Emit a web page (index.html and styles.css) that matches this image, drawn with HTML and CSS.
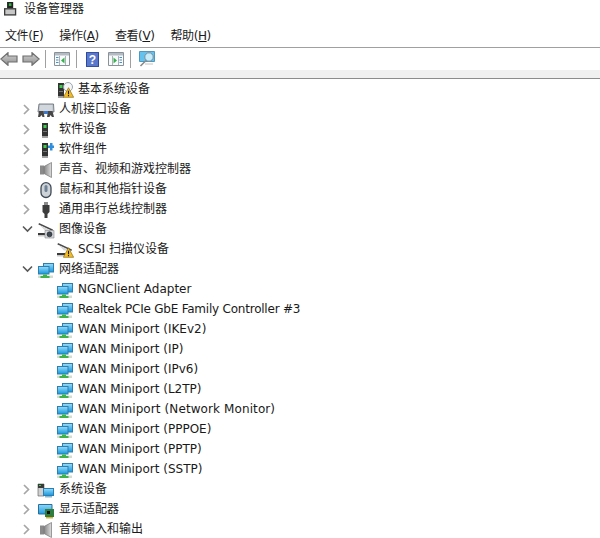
FILE: index.html
```html
<!DOCTYPE html>
<html lang="zh-CN">
<head>
<meta charset="utf-8">
<title>设备管理器</title>
<link rel="stylesheet" href="styles.css">
</head>
<body>
<svg class="defs" width="0" height="0" aria-hidden="true">
  <defs>
    <linearGradient id="scr" x1="0" y1="0" x2="0" y2="1"><stop offset="0" stop-color="#8fd8f7"/><stop offset="1" stop-color="#1f9be0"/></linearGradient>
    <linearGradient id="arrow" x1="0" y1="0" x2="0" y2="1"><stop offset="0" stop-color="#d2d2d2"/><stop offset="1" stop-color="#8f8f8f"/></linearGradient>
    <linearGradient id="cone" x1="0" y1="0" x2="1" y2="0"><stop offset="0" stop-color="#858585"/><stop offset="1" stop-color="#dedede"/></linearGradient>
    <symbol id="tower" viewBox="0 0 16 16"><path d="M0 1h6v13.500H0z" fill="#333"/><path d="M0 14.500h6V16H0z" fill="#a3a3a3"/><path d="M1.500 3h3v3h-3z" fill="#3bd04a"/><path d="M1 9h4v1H1z" fill="#777"/></symbol>
    <symbol id="warn" viewBox="0 0 16 16"><path d="M8 1 15.500 15H.5z" fill="#f4bd22" stroke="#7c5f12" stroke-width=".9"/><path d="M7.200 5.500h1.600v5H7.200zM7.200 11.500h1.600v1.800H7.200z" fill="#1c1c1c"/></symbol>
    <symbol id="net" viewBox="0 0 16 16"><path d="M5 1h11v9.500H5z" fill="#2c7fae"/><path d="M6 2h9v7.500H6z" fill="url(#scr)"/><path d="M0 4h11.500v8.500H0z" fill="#2c7fae"/><path d="M1 5h9.500v6.500H1z" fill="url(#scr)"/><path d="M0 13.500h15V16H0z" fill="#d5ddd2"/><path d="M5 12.500h4v1.500H5zM2.500 14h9v2h-9z" fill="#3fb24a"/></symbol>
    <symbol id="speaker" viewBox="0 0 16 16"><path d="M0 3.500h4v9H0z" fill="#8a8a8a"/><path d="M4 4.500 11.500 .5v15L4 11.500z" fill="url(#cone)" stroke="#757575" stroke-width=".7"/></symbol>
    <symbol id="chev-r" viewBox="0 0 9 11"><path d="M2 1 6.500 5.500 2 10" fill="none" stroke="#a6a6a6" stroke-width="1.700"/></symbol>
    <symbol id="chev-d" viewBox="0 0 11 9"><path d="M1 1.500 5.500 6 10 1.500" fill="none" stroke="#595959" stroke-width="1.600"/></symbol>
    <symbol id="scanner" viewBox="0 0 16 16"><path d="M1 1 15 7.500l-.6 1.400L.4 2.400z" fill="#4a4a4a"/><path d="M1.500 3 13 8.500H7z" fill="#d8d8d8"/><path d="M0 11h8v2H0z" fill="#3a3a3a"/><path d="M0 13h8v1.500H0z" fill="#c9c9c9"/></symbol>
  </defs>
</svg>

<div class="window">
  <header class="titlebar">
    <svg class="title-icon" viewBox="0 0 16 16"><path d="M0 7h14v8.500H0z" fill="#3c3c3c"/><path d="M1.500 8.500h11V14h-11z" fill="#c8c8c8"/><path d="M3.500 0h7v7h-7z" fill="#222"/><path d="M5.500 1.500h3v3h-3z" fill="#35b545"/></svg>
    <span class="title-text">设备管理器</span>
  </header>

  <nav class="menubar">
    <span>文件(<u>F</u>)</span>
    <span>操作(<u>A</u>)</span>
    <span>查看(<u>V</u>)</span>
    <span>帮助(<u>H</u>)</span>
  </nav>

  <div class="toolbar">
    <svg class="tb-arrow" viewBox="0 0 18 14"><path d="M8 .7 .8 7 8 13.300V10h9V4H8z" fill="url(#arrow)" stroke="#6f6f6f" stroke-width="1.200"/></svg>
    <svg class="tb-arrow" viewBox="0 0 18 14"><path d="M10 .7 17.200 7 10 13.300V10H1V4h9z" fill="url(#arrow)" stroke="#6f6f6f" stroke-width="1.200"/></svg>
    <i class="tb-sep"></i>
    <svg class="tb-icon" viewBox="0 0 16 14"><path d="M.5.500h15v13H.5z" fill="#f8fafb" stroke="#8a9299"/><path d="M1 1h14v2.500H1z" fill="#b4bbc2"/><path d="M2 5h2.500v1H2zM2 7.500h2.500v1H2zM2 10h2.500v1H2z" fill="#4b90c8"/><path d="M5.500 4v9M11.500 4v9" stroke="#aab1b8" fill="none"/><path d="M10.500 5.500v6L7 8.500z" fill="#34b34a"/></svg>
    <i class="tb-sep"></i>
    <svg class="tb-help" viewBox="0 0 14 16"><path d="M0 0h14v16H0z" fill="#28459c"/><path d="M1 1h12v14H1z" fill="#5a78cc"/><text x="7" y="13" text-anchor="middle" class="tb-q">?</text></svg>
    <svg class="tb-icon tb-gap" viewBox="0 0 16 14"><path d="M.5.500h15v13H.5z" fill="#f8fafb" stroke="#8a9299"/><path d="M1 1h14v2.500H1z" fill="#b4bbc2"/><path d="M11.500 5H14v1h-2.500zM11.500 7.500H14v1h-2.500zM11.500 10H14v1h-2.500z" fill="#4b90c8"/><path d="M4.500 4v9M10.500 4v9" stroke="#aab1b8" fill="none"/><path d="M5.500 5.500v6L9 8.500z" fill="#34b34a"/></svg>
    <i class="tb-sep"></i>
    <svg class="tb-scan" viewBox="0 0 16 16"><path d="M.5.500h15v10H.5z" fill="#63c2ee" stroke="#4f98c0"/><circle cx="10" cy="6" r="4.200" fill="#c6ecf9" stroke="#7f8f99"/><path d="M7 9.500 1.500 15" stroke="#8a8a8a" stroke-width="1.600" fill="none"/><path d="M6 13h8" stroke="#c4c4c4" fill="none"/></svg>
  </div>
  <div class="band"></div>

  <ul class="tree">
    <li class="child"><span class="ic"><svg viewBox="0 0 16 16"><use href="#tower" x="1"/><circle cx="11" cy="5" r="4.500" fill="#f4f6f8" stroke="#9aa7b0"/></svg><svg class="badge" viewBox="0 0 16 16"><use href="#warn"/></svg></span><span class="lbl">基本系统设备</span></li>
    <li><svg class="chev" viewBox="0 0 9 11"><use href="#chev-r"/></svg><span class="ic"><svg viewBox="0 0 16 16"><path d="M1 2h14.500l.5 8H0z" fill="#c3cad2" stroke="#6d7379" stroke-width=".9"/><path d="M2.500 4h11M2.500 6h11M2.500 8h11" stroke="#fff" stroke-dasharray="1 1" fill="none"/><path d="M1 9h4.500l1 6H4.500L3.500 13 2 15H0zM10 9h4.500L16 15h-2l-1.500-2-1 2H9z" fill="#474747"/><path d="M6 9h4v3H6z" fill="#3f78c4"/></svg></span><span class="lbl">人机接口设备</span></li>
    <li><svg class="chev" viewBox="0 0 9 11"><use href="#chev-r"/></svg><span class="ic"><svg viewBox="0 0 16 16"><use href="#tower" x="4"/></svg></span><span class="lbl">软件设备</span></li>
    <li><svg class="chev" viewBox="0 0 9 11"><use href="#chev-r"/></svg><span class="ic"><svg viewBox="0 0 16 16"><use href="#tower" x="4"/><path d="M10 3.500h2V1h2.500v2.500H16V6h-1.500v2.500H12V6h-2z" fill="#2f8fdc"/></svg></span><span class="lbl">软件组件</span></li>
    <li><svg class="chev" viewBox="0 0 9 11"><use href="#chev-r"/></svg><span class="ic"><svg viewBox="0 0 16 16"><use href="#speaker" x="2"/></svg></span><span class="lbl">声音、视频和游戏控制器</span></li>
    <li><svg class="chev" viewBox="0 0 9 11"><use href="#chev-r"/></svg><span class="ic"><svg viewBox="0 0 16 16"><rect x="3" y=".7" width="10" height="14.800" rx="5" fill="#ced3d8" stroke="#3f4a56" stroke-width="1.300"/><rect x="6.500" y="3" width="3" height="7" rx="1.500" fill="#6f8296"/></svg></span><span class="lbl">鼠标和其他指针设备</span></li>
    <li><svg class="chev" viewBox="0 0 9 11"><use href="#chev-r"/></svg><span class="ic"><svg viewBox="0 0 16 16"><path d="M6 0h4v3H6z" fill="#8c8c8c"/><path d="M4.500 3h7v7l-2 2v4h-3v-4l-2-2z" fill="#3d3d3d"/></svg></span><span class="lbl">通用串行总线控制器</span></li>
    <li><svg class="chev" viewBox="0 0 11 9"><use href="#chev-d"/></svg><span class="ic"><svg viewBox="0 0 16 16"><use href="#scanner"/><path d="M7 8.500h9V16H7z" fill="#d4d8dc" stroke="#888" stroke-width=".6"/><circle cx="11.500" cy="12.300" r="2.500" fill="#3f4a54" stroke="#222" stroke-width=".6"/></svg></span><span class="lbl">图像设备</span></li>
    <li class="child"><span class="ic"><svg viewBox="0 0 16 16"><use href="#scanner"/></svg><svg class="badge" viewBox="0 0 16 16"><use href="#warn"/></svg></span><span class="lbl">SCSI 扫描仪设备</span></li>
    <li><svg class="chev" viewBox="0 0 11 9"><use href="#chev-d"/></svg><span class="ic"><svg viewBox="0 0 16 16"><use href="#net"/></svg></span><span class="lbl">网络适配器</span></li>
    <li class="child"><span class="ic"><svg viewBox="0 0 16 16"><use href="#net"/></svg></span><span class="lbl">NGNClient Adapter</span></li>
    <li class="child"><span class="ic"><svg viewBox="0 0 16 16"><use href="#net"/></svg></span><span class="lbl tight">Realtek PCIe GbE Family Controller #3</span></li>
    <li class="child"><span class="ic"><svg viewBox="0 0 16 16"><use href="#net"/></svg></span><span class="lbl">WAN Miniport (IKEv2)</span></li>
    <li class="child"><span class="ic"><svg viewBox="0 0 16 16"><use href="#net"/></svg></span><span class="lbl">WAN Miniport (IP)</span></li>
    <li class="child"><span class="ic"><svg viewBox="0 0 16 16"><use href="#net"/></svg></span><span class="lbl">WAN Miniport (IPv6)</span></li>
    <li class="child"><span class="ic"><svg viewBox="0 0 16 16"><use href="#net"/></svg></span><span class="lbl">WAN Miniport (L2TP)</span></li>
    <li class="child"><span class="ic"><svg viewBox="0 0 16 16"><use href="#net"/></svg></span><span class="lbl loose">WAN Miniport (Network Monitor)</span></li>
    <li class="child"><span class="ic"><svg viewBox="0 0 16 16"><use href="#net"/></svg></span><span class="lbl">WAN Miniport (PPPOE)</span></li>
    <li class="child"><span class="ic"><svg viewBox="0 0 16 16"><use href="#net"/></svg></span><span class="lbl">WAN Miniport (PPTP)</span></li>
    <li class="child"><span class="ic"><svg viewBox="0 0 16 16"><use href="#net"/></svg></span><span class="lbl">WAN Miniport (SSTP)</span></li>
    <li><svg class="chev" viewBox="0 0 9 11"><use href="#chev-r"/></svg><span class="ic"><svg viewBox="0 0 16 16"><path d="M0 2h6v12H0z" fill="#d0d0d0" stroke="#555" stroke-width=".6"/><path d="M0 2h6v4H0z" fill="#3a3a3a"/><path d="M1 3h2v1H1z" fill="#3bd04a"/><path d="M5 6h11v8H5z" fill="#2a7fb4"/><path d="M6 7h9v6H6z" fill="url(#scr)"/><path d="M7 14h7v1.500H7z" fill="#8fb6cc"/></svg></span><span class="lbl">系统设备</span></li>
    <li><svg class="chev" viewBox="0 0 9 11"><use href="#chev-r"/></svg><span class="ic"><svg viewBox="0 0 16 16"><path d="M.5 2.500h13.500v9.500H.5z" fill="url(#scr)" stroke="#2a6f9c"/><path d="M7 7h9v8H7z" fill="#2f7d3f"/><path d="M8 15h7v1.500H8z" fill="#e0b030"/><path d="M9 9h3v3H9z" fill="#111"/></svg></span><span class="lbl">显示适配器</span></li>
    <li><svg class="chev" viewBox="0 0 9 11"><use href="#chev-r"/></svg><span class="ic"><svg viewBox="0 0 16 16"><use href="#speaker" x="2"/></svg></span><span class="lbl">音频输入和输出</span></li>
  </ul>
</div>
</body>
</html>
```
FILE: styles.css
```css
* { box-sizing: border-box; }
html, body { margin: 0; padding: 0; background: #fff; }
body {
  width: 600px;
  height: 538px;
  overflow: hidden;
  font-family: "DejaVu Sans", "Noto Sans CJK SC", sans-serif;
  font-size: 12px;
  color: #1a1a1a;
}
.defs { position: absolute; }
.window { display: flex; flex-direction: column; height: 538px; overflow: hidden; }

.titlebar { display: flex; align-items: center; height: 17px; padding-left: 4px; flex: none; }
.title-icon { width: 14px; height: 16px; flex: none; }
.title-text { margin-left: 6px; line-height: 19px; padding-top: 2px; }

.menubar {
  display: flex;
  gap: 16px;
  align-items: center;
  height: 31px;
  padding: 8px 0 0 5px;
  flex: none;
  letter-spacing: -0.4px;
  line-height: 18px;
  border-bottom: 1px solid #a0a0a0;
}
.menubar u { text-decoration: underline; text-underline-offset: 1px; }

.toolbar { display: flex; align-items: center; height: 22px; flex: none; }
.tb-arrow { width: 18px; height: 14px; margin-right: 4px; flex: none; }
.tb-sep { width: 1px; height: 18px; background: #a0a0a0; margin: 0 8px 0 1px; flex: none; }
.tb-icon { width: 16px; height: 14px; margin-right: 5px; flex: none; }
.tb-gap { margin-left: 9px; }
.tb-help { width: 13px; height: 15px; margin-left: 1px; flex: none; }
.tb-q { font-size: 13px; font-weight: 700; fill: #fff; font-family: "Liberation Sans", sans-serif; }
.tb-scan { width: 16px; height: 16px; flex: none; }

.band { height: 9px; flex: none; background: #f0f0f0; border-bottom: 1px solid #8c8c8c; }

.tree { list-style: none; margin: 0; padding: 0; flex: none; }
.tree li { display: flex; align-items: center; height: 20px; padding-left: 22px; white-space: nowrap; }
.tree li.child { padding-left: 57px; }
.chev { width: 9px; height: 11px; margin-right: 7px; flex: none; }
.tree li > svg[viewBox="0 0 11 9"] { width: 11px; height: 9px; margin-right: 5px; }
.ic { position: relative; display: flex; width: 16px; height: 16px; margin-right: 5px; flex: none; top: 1px; }
.ic svg { width: 100%; height: 100%; overflow: visible; }
.ic .badge { position: absolute; right: -1px; bottom: 0; width: 11px; height: 11px; }
.lbl { line-height: 20px; }
.tight { letter-spacing: -0.22px; }
.loose { letter-spacing: 0.1px; }
```
